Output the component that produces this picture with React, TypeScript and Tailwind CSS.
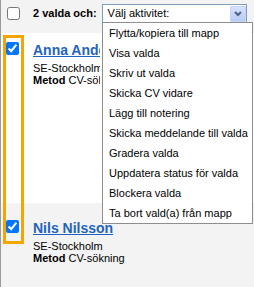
import { FC } from "react";

const actions = [
  "Flytta/kopiera till mapp",
  "Visa valda",
  "Skriv ut valda",
  "Skicka CV vidare",
  "Lägg till notering",
  "Skicka meddelande till valda",
  "Gradera valda",
  "Uppdatera status för valda",
  "Blockera valda",
  "Ta bort vald(a) från mapp",
];

const Candidate: FC<{ name: string; bg: string; pt: string; h: string; clip?: boolean }> = ({ name, bg, pt, h, clip }) => {
  return (
    <div className={`flex items-start pl-[5px] ${bg} ${pt} ${h}`}>
      <input type="checkbox" defaultChecked className="m-0 w-[13px] h-[13px] shrink-0" />
      <div className={`ml-[14px] flex flex-col ${clip ? "w-[67px] overflow-hidden" : ""}`}>
        <a href="#" className="text-[14px] leading-[16px] font-bold text-[#1f63c0] underline whitespace-nowrap">
          {name}
        </a>
        <span className="mt-[4px] text-[11px] leading-[12px] whitespace-nowrap">SE-Stockholm</span>
        <span className="text-[11px] leading-[12px] whitespace-nowrap">
          <b>Metod</b> CV-sökning
        </span>
      </div>
    </div>
  );
};

const App: FC = () => {
  return (
    <div className="relative w-[254px] h-[287px] overflow-hidden border-l border-[#9a9a9a] bg-white text-black font-['Liberation_Sans',Arial,sans-serif]">
      {/* header */}
      <div className="h-[33px] bg-[#f3f3f3] pt-[4px] pl-[6px]">
        <div className="flex items-center h-[19px]">
          <input type="checkbox" className="m-0 w-[13px] h-[13px] shrink-0" />
          <span className="ml-[13px] text-[11px] font-bold whitespace-nowrap">2 valda och:</span>
          <div className="ml-[5px] w-[145px] h-[19px] border border-[#7f9db9] bg-white flex items-center justify-between">
            <span className="pl-[5px] text-[11px] whitespace-nowrap">Välj aktivitet:</span>
            <div className="w-[16px] h-[16px] flex items-center justify-center bg-[linear-gradient(#d6e2fd,#b8cbf7)] border border-[#c5d5f8] rounded-[1px]">
              <svg width="8" height="6" viewBox="0 0 8 6">
                <polyline points="1,1 4,4 7,1" fill="none" stroke="#4d6185" strokeWidth="2" />
              </svg>
            </div>
          </div>
        </div>
      </div>

      <Candidate name="Anna Andersson" bg="bg-white" pt="pt-[9px]" h="h-[170px]" clip />
      <Candidate name="Nils Nilsson" bg="bg-[#f3f3f3]" pt="pt-[17px]" h="h-[84px]" />

      {/* highlight around checkboxes */}
      <div className="absolute left-[2px] top-[35px] w-[21px] h-[209px] border-[3px] border-[#f5a500]" />

      {/* open dropdown */}
      <div className="absolute left-[101px] top-[22px] w-[151px] h-[202px] border border-[#8e8e8e] bg-white">
        {actions.map((a) => (
          <div key={a} className="h-[20px] flex items-center pl-[6px] text-[11px] whitespace-nowrap">
            {a}
          </div>
        ))}
      </div>
    </div>
  );
};

export default App;
